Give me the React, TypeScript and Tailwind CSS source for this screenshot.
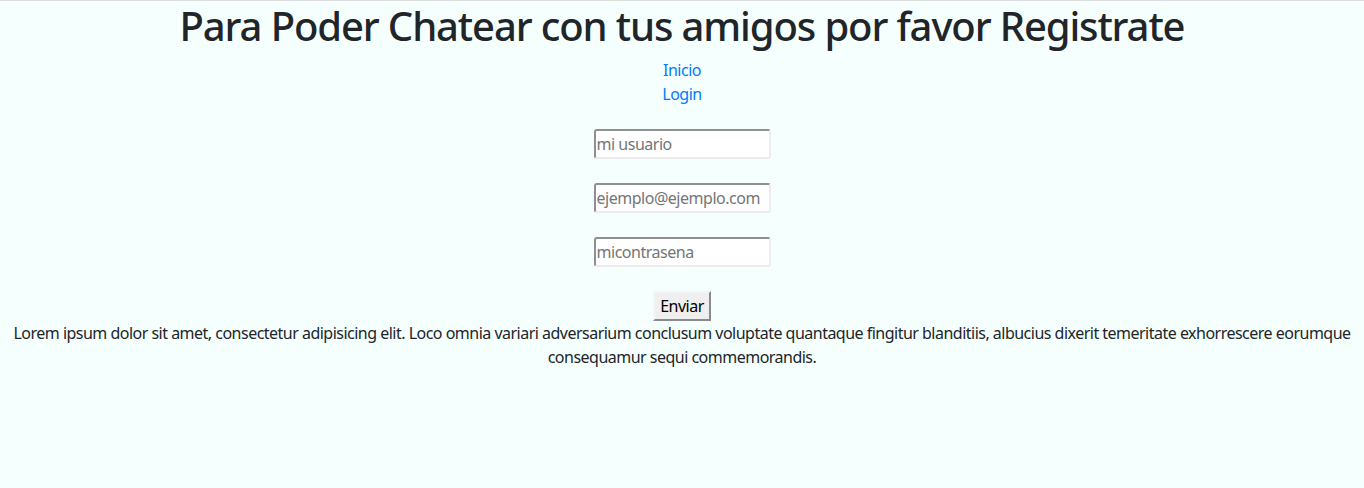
export default function App() {
  const inputCls =
    "h-[30px] w-[177px] rounded-[3px] border-2 border-t-[#8f8f8f] border-l-[#8f8f8f] border-b-[#ececec] border-r-[#ececec] bg-white px-[1px] text-[16px] tracking-[-0.03em] text-[#212529] placeholder:text-[#757575] outline-none";

  return (
    <div
      className="min-h-[488px] border-t border-[#dcdcdc] bg-[#f5fffe] text-center text-[16px] leading-[24px] tracking-[-0.032em] text-[#212529]"
      style={{ fontFamily: '"Noto Sans", "Open Sans", sans-serif' }}
    >
      <h1 className="mb-2 pt-[1px] text-[40px] font-medium leading-[48px] tracking-[-0.028em]">
        Para Poder Chatear con tus amigos por favor Registrate
      </h1>
      <nav className="flex flex-col items-center">
        <a href="#" className="text-[#007bff]">
          Inicio
        </a>
        <a href="#" className="text-[#007bff]">
          Login
        </a>
      </nav>
      <form className="mt-[23px] flex flex-col items-center gap-6" onSubmit={(e) => e.preventDefault()}>
        <input type="text" placeholder="mi usuario" className={inputCls} />
        <input type="email" placeholder="ejemplo@ejemplo.com" className={inputCls} />
        <input type="password" placeholder="micontrasena" className={inputCls} />
        <button
          type="submit"
          className="h-[30px] w-[58px] border-2 border-t-[#f5f5f5] border-l-[#f5f5f5] border-b-[#8a8a8a] border-r-[#8a8a8a] bg-[#efefef] text-[16px] text-black"
        >
          Enviar
        </button>
      </form>
      <p>
        Lorem ipsum dolor sit amet, consectetur adipisicing elit. Loco omnia variari adversarium conclusum voluptate
        quantaque fingitur blanditiis, albucius dixerit temeritate exhorrescere eorumque consequamur sequi
        commemorandis.
      </p>
    </div>
  );
}
